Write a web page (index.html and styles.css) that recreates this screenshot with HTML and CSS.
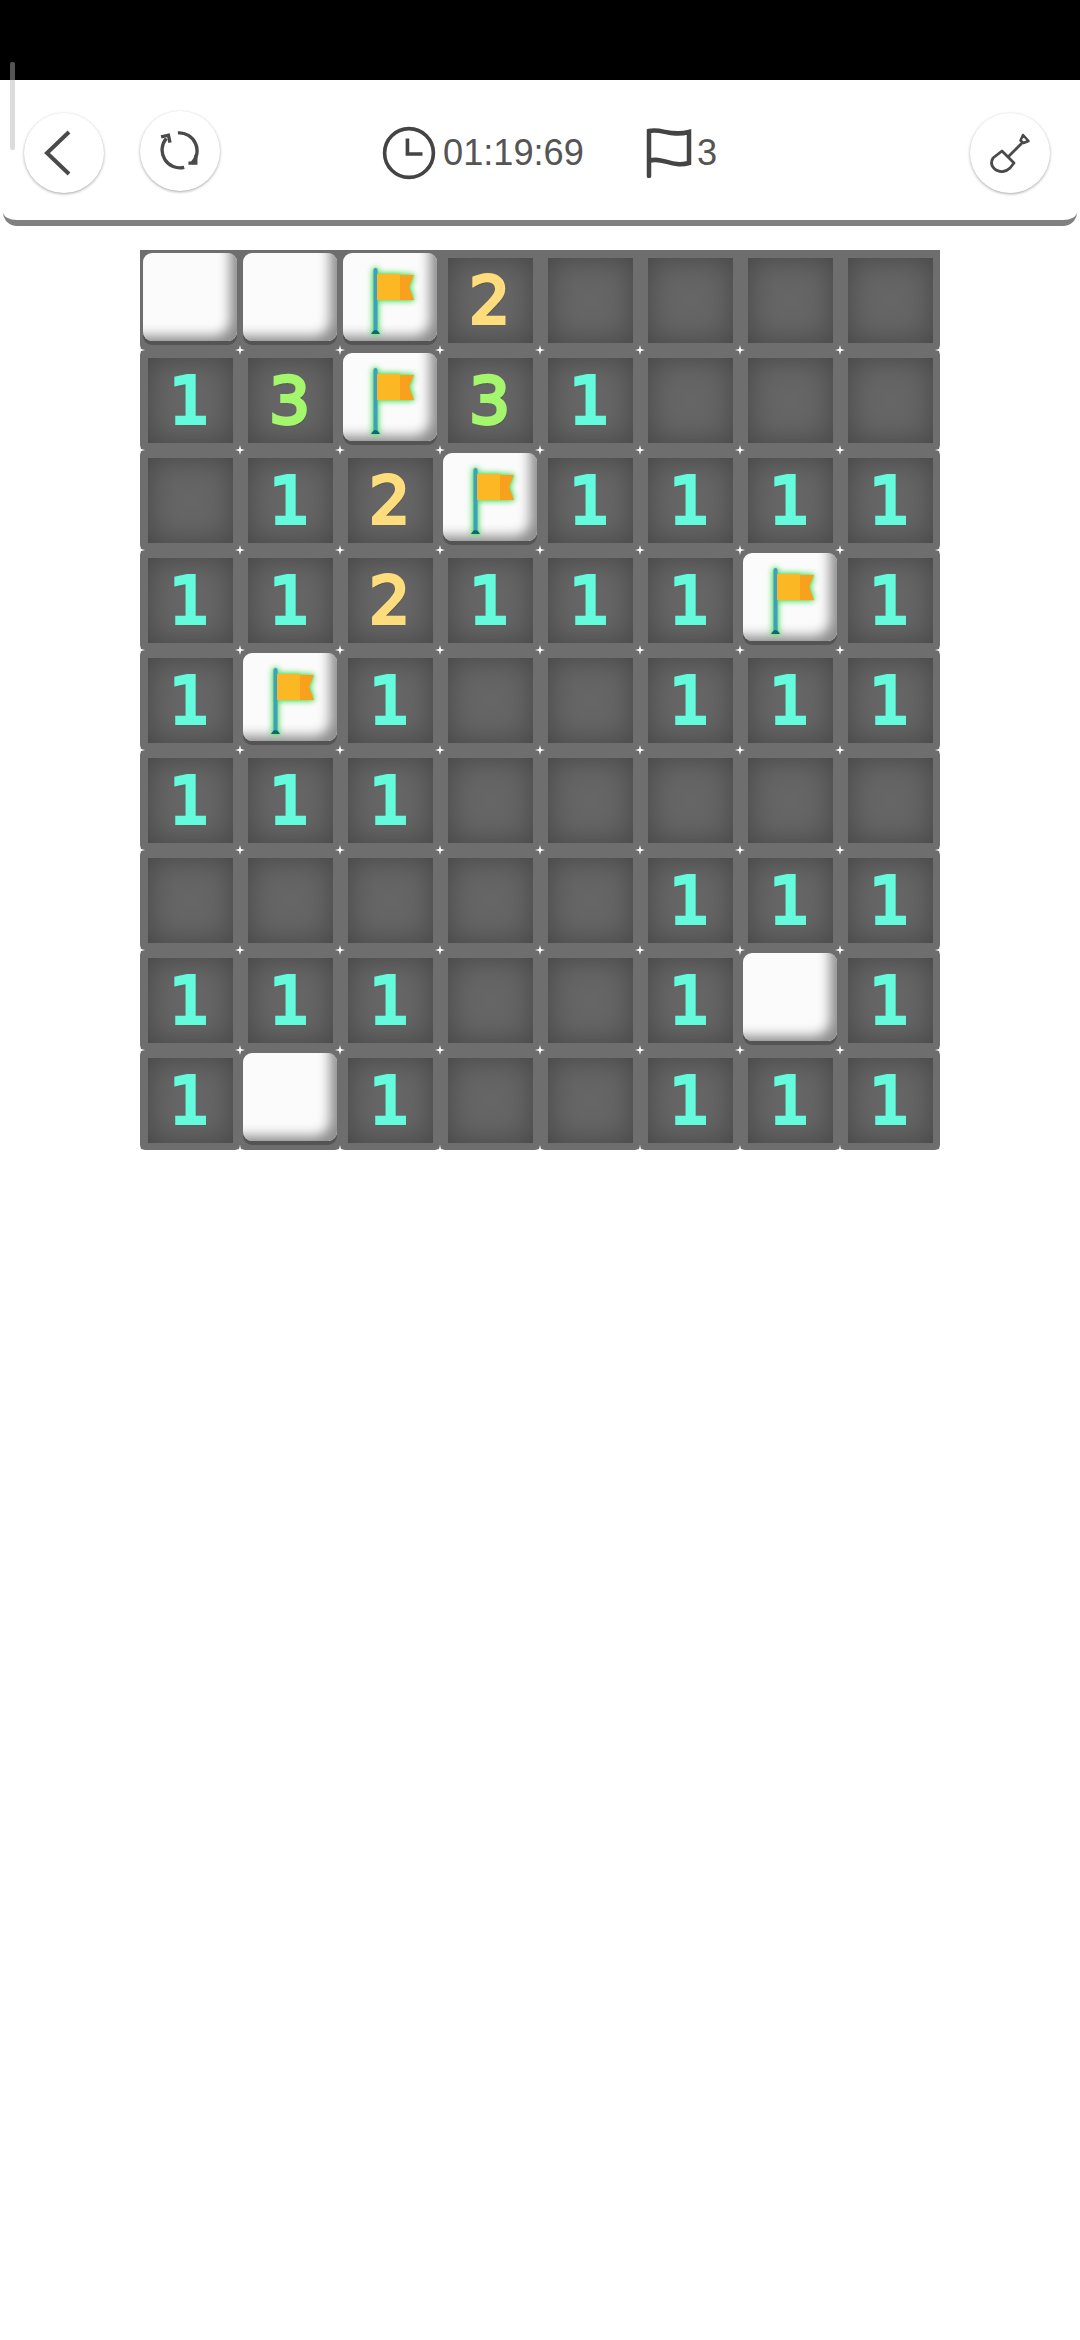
FILE: index.html
```html
<!DOCTYPE html>
<html lang="en">
<head>
<meta charset="utf-8">
<title>Minesweeper</title>
<link rel="stylesheet" href="styles.css">
</head>
<body>
<svg class="defs" width="0" height="0" aria-hidden="true">
  <defs>
    <symbol id="flag" viewBox="0 0 94 88">
      <rect x="30.500" y="15" width="4" height="65" rx="2" fill="#3f9fc0"/>
      <path d="M28 81 Q32.500 73 37 81Z" fill="#0f6a70"/>
      <path d="M34 21 H57 V47 H34Z" fill="#fcb824"/>
      <path d="M57 22 H71 L66 34 L71 47 H57Z" fill="#f9a11d"/>
    </symbol>
  </defs>
</svg>
<div class="scroll"></div>
<div class="status"></div>
<header class="bar">
  <button class="round" aria-label="Back"><svg class="ic-back" viewBox="0 0 40 48"><path d="M28 3 L6 24 L28 45" fill="none" stroke="#4a4a4a" stroke-width="4"/></svg></button>
  <button class="round lift" aria-label="Restart"><svg class="ic" viewBox="0 0 38 38"><path d="M17 1.800 A17 17 0 0 1 30 31 M23 34.500 A17 17 0 0 1 6 7" fill="none" stroke="#4a4a4a" stroke-width="3.200"/><path d="M1 5.500 L8 4 L9.500 11 M27 30.500 H34 V23" fill="none" stroke="#4a4a4a" stroke-width="3.200"/></svg></button>
  <div class="info">
    <svg class="clock" viewBox="0 0 52 52"><circle cx="26" cy="26" r="23.500" fill="none" stroke="#444" stroke-width="3.500"/><path d="M24.500 12 V27 H39" fill="none" stroke="#444" stroke-width="3.500"/></svg>
    <span class="time">01:19:69</span>
    <svg class="pennant" viewBox="0 0 46 50"><path d="M3 48 V3 C16 0 24 9 43 4 V35 C26 40 16 28 3 33" fill="none" stroke="#444" stroke-width="4.500" stroke-linecap="round"/></svg>
    <span class="count">3</span>
  </div>
  <button class="round end" aria-label="Dig"><svg class="ic" viewBox="0 0 40 40"><path d="M12 18 L24 30 L20 35 Q14 41 6 37 Q-1 32 3 25Z M18 24 L33 9" fill="none" stroke="#4a4a4a" stroke-width="2.800" stroke-linejoin="round"/><path d="M30.500 7.500 L33 2 L38.500 8 L33.500 10Z" fill="none" stroke="#4a4a4a" stroke-width="2.500" stroke-linejoin="round"/></svg></button>
</header>
<main class="board">
  <div class="cell"><div class="tile"></div></div>
  <div class="cell"><div class="tile"></div></div>
  <div class="cell"><div class="tile"><svg class="flag"><use href="#flag"/></svg></div></div>
  <div class="cell"><div class="well two">2</div></div>
  <div class="cell"><div class="well"></div></div>
  <div class="cell"><div class="well"></div></div>
  <div class="cell"><div class="well"></div></div>
  <div class="cell"><div class="well"></div></div>

  <div class="cell"><div class="well one">1</div></div>
  <div class="cell"><div class="well three">3</div></div>
  <div class="cell"><div class="tile"><svg class="flag"><use href="#flag"/></svg></div></div>
  <div class="cell"><div class="well three">3</div></div>
  <div class="cell"><div class="well one">1</div></div>
  <div class="cell"><div class="well"></div></div>
  <div class="cell"><div class="well"></div></div>
  <div class="cell"><div class="well"></div></div>

  <div class="cell"><div class="well"></div></div>
  <div class="cell"><div class="well one">1</div></div>
  <div class="cell"><div class="well two">2</div></div>
  <div class="cell"><div class="tile"><svg class="flag"><use href="#flag"/></svg></div></div>
  <div class="cell"><div class="well one">1</div></div>
  <div class="cell"><div class="well one">1</div></div>
  <div class="cell"><div class="well one">1</div></div>
  <div class="cell"><div class="well one">1</div></div>

  <div class="cell"><div class="well one">1</div></div>
  <div class="cell"><div class="well one">1</div></div>
  <div class="cell"><div class="well two">2</div></div>
  <div class="cell"><div class="well one">1</div></div>
  <div class="cell"><div class="well one">1</div></div>
  <div class="cell"><div class="well one">1</div></div>
  <div class="cell"><div class="tile"><svg class="flag"><use href="#flag"/></svg></div></div>
  <div class="cell"><div class="well one">1</div></div>

  <div class="cell"><div class="well one">1</div></div>
  <div class="cell"><div class="tile"><svg class="flag"><use href="#flag"/></svg></div></div>
  <div class="cell"><div class="well one">1</div></div>
  <div class="cell"><div class="well"></div></div>
  <div class="cell"><div class="well"></div></div>
  <div class="cell"><div class="well one">1</div></div>
  <div class="cell"><div class="well one">1</div></div>
  <div class="cell"><div class="well one">1</div></div>

  <div class="cell"><div class="well one">1</div></div>
  <div class="cell"><div class="well one">1</div></div>
  <div class="cell"><div class="well one">1</div></div>
  <div class="cell"><div class="well"></div></div>
  <div class="cell"><div class="well"></div></div>
  <div class="cell"><div class="well"></div></div>
  <div class="cell"><div class="well"></div></div>
  <div class="cell"><div class="well"></div></div>

  <div class="cell"><div class="well"></div></div>
  <div class="cell"><div class="well"></div></div>
  <div class="cell"><div class="well"></div></div>
  <div class="cell"><div class="well"></div></div>
  <div class="cell"><div class="well"></div></div>
  <div class="cell"><div class="well one">1</div></div>
  <div class="cell"><div class="well one">1</div></div>
  <div class="cell"><div class="well one">1</div></div>

  <div class="cell"><div class="well one">1</div></div>
  <div class="cell"><div class="well one">1</div></div>
  <div class="cell"><div class="well one">1</div></div>
  <div class="cell"><div class="well"></div></div>
  <div class="cell"><div class="well"></div></div>
  <div class="cell"><div class="well one">1</div></div>
  <div class="cell"><div class="tile"></div></div>
  <div class="cell"><div class="well one">1</div></div>

  <div class="cell"><div class="well one">1</div></div>
  <div class="cell"><div class="tile"></div></div>
  <div class="cell"><div class="well one">1</div></div>
  <div class="cell"><div class="well"></div></div>
  <div class="cell"><div class="well"></div></div>
  <div class="cell"><div class="well one">1</div></div>
  <div class="cell"><div class="well one">1</div></div>
  <div class="cell"><div class="well one">1</div></div>
</main>
</body>
</html>
```
FILE: styles.css
```css
* { box-sizing: border-box; }
html, body { margin: 0; padding: 0; background: #fff; }
body {
  position: relative;
  width: 1080px;
  height: 2340px;
  overflow: hidden;
  font-family: "Liberation Sans", Arial, sans-serif;
}
.defs { position: absolute; }
.status { height: 80px; background: #000; }
.scroll {
  position: absolute;
  left: 10px;
  top: 62px;
  width: 5px;
  height: 88px;
  border-radius: 2px;
  background: linear-gradient(#555 0, #555 18px, #dcdcdc 18px);
  z-index: 2;
}
.bar {
  display: flex;
  align-items: center;
  height: 146px;
  margin: 0 3px;
  padding: 6px 27px 0 21px;
  background: #fff;
  border-bottom: 6px solid #808080;
  border-radius: 0 0 14px 14px;
}
.round {
  display: flex;
  align-items: center;
  justify-content: center;
  width: 80px;
  height: 80px;
  padding: 0;
  margin-right: 36px;
  border: 0;
  border-radius: 50%;
  background: #fff;
  box-shadow: 0 1px 3px rgba(0,0,0,.35);
}
.round.lift { margin-bottom: 4px; }
.round.end { margin: 0 0 0 auto; }
.ic { width: 40px; height: 40px; }
.ic-back { width: 40px; height: 48px; margin-right: 6px; }
.info {
  display: flex;
  align-items: center;
  margin-left: 126px;
  color: #555;
  font-size: 36.200px;
}
.clock { width: 54px; height: 54px; margin-right: 7px; }
.time { width: 142px; }
.pennant { width: 46px; height: 50px; margin: 0 5px 0 61px; }
.board {
  display: grid;
  grid-template-columns: repeat(8, 100px);
  grid-auto-rows: 100px;
  width: 800px;
  margin: 24px 0 0 140px;
  background: #6e6e6e;
  overflow: hidden;
  position: relative;
}
.cell { position: relative; padding: 8px 7px 7px 8px; }
.cell::after,
.cell:nth-child(8n)::before {
  content: "";
  position: absolute;
  width: 10px;
  height: 10px;
  bottom: -5px;
  left: -5px;
  background: #fff;
  clip-path: polygon(50% 0, 60% 40%, 100% 50%, 60% 60%, 50% 100%, 40% 60%, 0 50%, 40% 40%);
  z-index: 1;
}
.cell:nth-child(8n)::before { left: auto; right: -5px; }
.well {
  display: flex;
  align-items: center;
  justify-content: center;
  width: 85px;
  height: 85px;
  padding-right: 2px;
  background: #666;
  box-shadow: inset 0 0 30px #444;
  font-family: "DejaVu Sans", sans-serif;
  font-size: 64px;
  font-weight: 400;
  line-height: 1;
  -webkit-text-stroke: 3.800px currentColor;
  text-shadow: 1px 2px 1px #333;
}
.one { color: #64fbdd; }
.two { color: #ffdc7c; }
.three { color: #a4f76c; }
.cell:has(.tile) { padding: 3px; }
.tile {
  width: 94px;
  height: 88px;
  border-radius: 9px;
  background: #fbfbfb;
  box-shadow:
    0 4px 0 #545454,
    inset -14px -12px 12px -7px #8e8e8e;
}
.flag {
  display: block;
  width: 94px;
  height: 88px;
  filter: drop-shadow(0 0 3px #66e070) drop-shadow(0 0 1px #66e070);
}
```
